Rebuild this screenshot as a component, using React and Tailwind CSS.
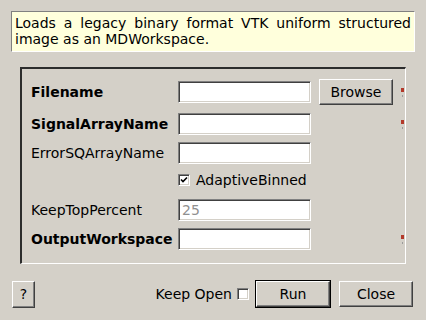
const sunken =
  "border border-t-[#808080] border-l-[#808080] border-b-white border-r-white shadow-[inset_1px_1px_0_#404040,inset_-1px_-1px_0_#d4d0c8]";
const raised =
  "border border-t-white border-l-white border-b-[#404040] border-r-[#404040] shadow-[inset_-1px_-1px_0_#808080]";

const Star = () => (
  <div className="ml-[8px] flex flex-col items-start w-[3px]">
    <div className="w-[3px] h-[4px] bg-[#b3392a]" />
    <div className="ml-[1px] mt-[3px] w-[1px] h-[2px] bg-[#9a9a9a]" />
  </div>
);

const TextInput = ({ value, disabled }) => (
  <div
    className={`w-[133px] h-[22px] bg-white ${sunken} flex items-center px-[3px] ${
      disabled ? "text-[#909090]" : ""
    }`}
  >
    {value}
  </div>
);

const CheckBox = ({ checked }) => (
  <div className={`w-[12px] h-[12px] bg-white ${sunken} flex items-center justify-center`}>
    {checked && (
      <svg width="8" height="8" viewBox="0 0 8 8">
        <path d="M1 3.5 L3 5.5 L7 1.5" stroke="#000" strokeWidth="1.6" fill="none" />
      </svg>
    )}
  </div>
);

const Row = ({ label, bold, children, star, className = "" }) => (
  <div className={`flex items-center h-[26px] ${className}`}>
    <div className={`w-[147px] whitespace-nowrap ${bold ? "font-bold" : ""}`}>{label}</div>
    {children}
    {star && <Star />}
  </div>
);

export default function App() {
  return (
    <div className="w-[426px] h-[320px] overflow-hidden bg-[#d4d0c8] text-black text-[14px] leading-[16px] font-['DejaVu_Sans',sans-serif] flex flex-col pt-[11px] px-[11px]">
      <div className="h-[41px] bg-[#ffffdc] border border-t-[#808080] border-l-[#808080] border-b-white border-r-white px-[3px] pt-[3px]">
        <p className="text-justify [text-align-last:left]">
          Loads a legacy binary format VTK uniform structured image as an MDWorkspace.
        </p>
      </div>

      <div className="mt-[15px] ml-[9px] w-[386px] h-[197px] border-t-2 border-l-2 border-t-[#2c2c2c] border-l-[#2c2c2c] border-b border-r border-b-white border-r-white pl-[9px] pt-[10px] flex flex-col">
        <Row label="Filename" bold star>
          <TextInput />
          <button className={`ml-[8px] w-[74px] h-[26px] bg-[#d4d0c8] ${raised}`}>Browse</button>
        </Row>
        <Row label="SignalArrayName" bold star className="mt-[6px]">
          <TextInput />
          <div className="ml-[8px] w-[74px]" />
        </Row>
        <Row label="ErrorSQArrayName" className="mt-[3px]">
          <TextInput />
        </Row>
        <Row label="" className="mt-[1px]">
          <CheckBox checked />
          <span className="ml-[6px]">AdaptiveBinned</span>
        </Row>
        <Row label="KeepTopPercent" className="mt-[4px]">
          <TextInput value="25" disabled />
        </Row>
        <Row label="OutputWorkspace" bold star className="mt-[3px]">
          <TextInput />
          <div className="ml-[8px] w-[74px]" />
        </Row>
      </div>

      <div className="mt-[16px] h-[28px] flex items-center">
        <button className={`ml-[1px] w-[23px] h-[27px] bg-[#d4d0c8] ${raised}`}>?</button>
        <div className="flex-1" />
        <span>Keep Open</span>
        <div className="ml-[5px]">
          <CheckBox />
        </div>
        <div className="ml-[6px] w-[76px] h-[28px] border border-black flex">
          <button className={`flex-1 bg-[#d4d0c8] ${raised}`}>Run</button>
        </div>
        <button className={`ml-[8px] mr-[2px] w-[74px] h-[26px] bg-[#d4d0c8] ${raised}`}>Close</button>
      </div>
    </div>
  );
}
